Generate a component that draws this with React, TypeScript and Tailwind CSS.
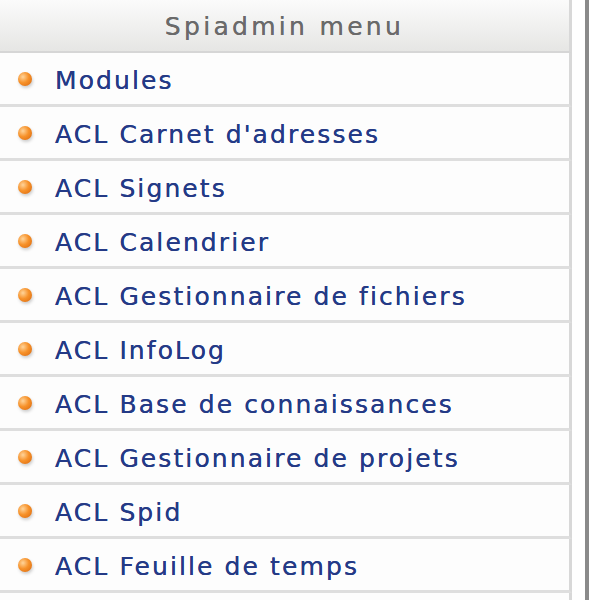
const items = [
  'Modules',
  "ACL Carnet d'adresses",
  'ACL Signets',
  'ACL Calendrier',
  'ACL Gestionnaire de fichiers',
  'ACL InfoLog',
  'ACL Base de connaissances',
  'ACL Gestionnaire de projets',
  'ACL Spid',
  'ACL Feuille de temps',
];

function Bullet() {
  return (
    <span className="relative inline-block w-[14px] h-[14px] shrink-0">
      <span className="absolute left-[1px] top-[2px] w-[14px] h-[14px] rounded-full bg-[#00000030] blur-[1.5px]" />
      <span className="absolute inset-0 rounded-full bg-[radial-gradient(circle_at_35%_35%,#ffd49a_0%,#f7922a_45%,#d9660b_100%)]" />
    </span>
  );
}

export default function App() {
  return (
    <div className="flex h-[600px] overflow-hidden bg-white font-['DejaVu_Sans',Verdana,sans-serif]">
      <div className="w-[572px] shrink-0 flex flex-col">
        <div className="h-[53px] shrink-0 flex items-center justify-center pt-[3px] bg-gradient-to-b from-[#fbfbfb] to-[#e6e6e4] border-b-[2px] border-b-[#d6d6d6] border-r-[3px] border-r-[#d8d8d8] text-[25px] text-[#6a6a6a] tracking-[3.3px] [text-shadow:0_0_0.5px_#6a6a6a]">
          Spiadmin menu
        </div>
        {items.map((label) => (
          <div
            key={label}
            className="h-[54px] shrink-0 flex items-center bg-[#fdfdfd] border-b-[3px] border-b-[#dedede] border-r-[3px] border-r-[#d8d8d8]"
          >
            <span className="pl-[18px] pr-[23px] flex items-center">
              <Bullet />
            </span>
            <span className="pt-[5px] text-[25px] text-[#243a86] tracking-[2.1px] whitespace-nowrap [text-shadow:0_0_0.6px_#243a86]">
              {label}
            </span>
          </div>
        ))}
        <div className="h-[54px] shrink-0 bg-[#fdfdfd] border-r-[3px] border-r-[#d8d8d8]" />
      </div>
      <div className="w-[13px] shrink-0 bg-white" />
      <div className="w-[4px] shrink-0 bg-[#8a8a8a]" />
    </div>
  );
}
